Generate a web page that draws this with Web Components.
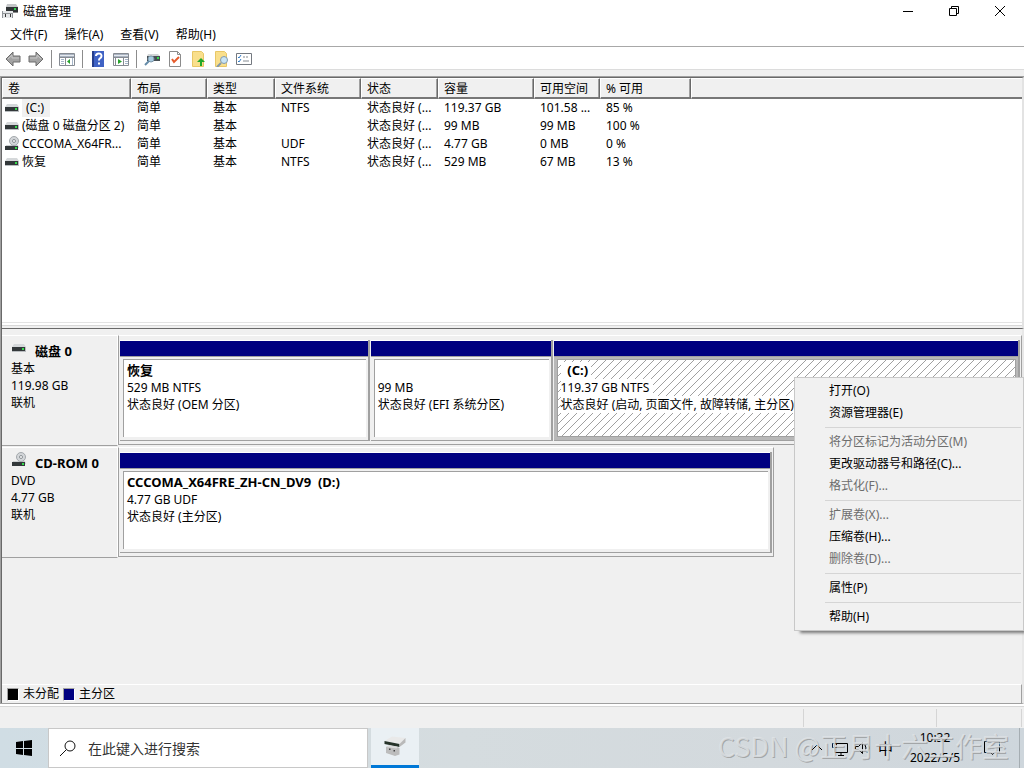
<!DOCTYPE html>
<html lang="zh-CN">
<head>
<meta charset="utf-8">
<title>磁盘管理</title>
<style>
html, body { margin: 0; height: 100%; }
body { font: 12px/18px "Noto Sans", "Noto Sans CJK SC", sans-serif; color: #000; background: #f0f0f0; overflow: hidden; }
</style>
</head>
<body>
<disk-desktop></disk-desktop>
<script>
const ICONS = {
  app: `<path d="M5 1h9l2 3H4z" fill="#c4c6c8"/><path d="M4 4h12v6H4z" fill="#303436"/><path d="M4 9h12v1H4z" fill="#888"/><path d="M12 5h2v2h-2z" fill="#2fd04a"/><path d="M0 8h11v7H0z" fill="#909498"/><path d="M1 8h10v2H1zM1 11h9v4H1z" fill="#e4e6e8"/><path d="M3 11h1v3H3zM8 11h1v3H8z" fill="#333"/>`,
  drive: `<path d="M3 4h10l2 3H1z" fill="#d5d8da"/><path d="M1 7h14v5H1z" fill="#b9bdc0"/><path d="M1 7h13v4H1z" fill="#33383a"/><path d="M11 8h2v2h-2z" fill="#35dc4c"/>`,
  cd: `<path d="M2 9h12l1 3H1z" fill="#cdd0d2"/><path d="M1 10h13v4H1z" fill="#33383a"/><path d="M11 11h2v2h-2z" fill="#35dc4c"/><circle cx="10" cy="5" r="4.500" fill="#d3d6d9" stroke="#a3a8ac"/><circle cx="10" cy="5" r="1.500" fill="#fff" stroke="#8a9094"/>`,
  back: `<path d="M1 8l7-7v4h7v6H8v4z" fill="#a3a3a3" stroke="#6c6c6c"/><path d="M3 8l4-4v3h7" fill="none" stroke="#c6c6c6"/>`,
  next: `<path d="M15 8L8 1v4H1v6h7v4z" fill="#a3a3a3" stroke="#6c6c6c"/><path d="M13 8L9 4v3H2" fill="none" stroke="#c6c6c6"/>`,
  tree: `<path d="M.5 2.500h15v12H.5z" fill="#fff" stroke="#868b92"/><path d="M1 3h14v3H1z" fill="#a9b3c1"/><path d="M1 4.500h14" stroke="#e4e8ee"/><path d="M1 6.500h14M6.500 7v7" stroke="#868b92"/><path d="M2 8.500h3M2 10.500h3M2 12.500h3M13.500 7v7" stroke="#a5b5c8"/><path d="M11 8v5L8 10.500z" fill="#27a32c"/>`,
  help: `<path d="M2 0h12v16H2z" fill="#3f62c4"/><path d="M2 0h2v16H2z" fill="#263e8c"/><path d="M6 5q0-2.500 2.800-2.500T11.500 5q0 1.500-1.700 2.500Q9 8 9 9.500M9 11.500v2" fill="none" stroke="#fff" stroke-width="2"/>`,
  action: `<path d="M.5 2.500h15v12H.5z" fill="#fff" stroke="#868b92"/><path d="M1 3h14v3H1z" fill="#a9b3c1"/><path d="M1 4.500h14" stroke="#e4e8ee"/><path d="M1 6.500h14M10.500 7v7M2.500 7v7" stroke="#868b92"/><path d="M12 8.500h3M12 10.500h3M12 12.500h3" stroke="#a5b5c8"/><path d="M5 8v5l4-2.500z" fill="#27a32c"/>`,
  rescan: `<path d="M4 3h10l2 2H3z" fill="#d2d5d7"/><path d="M3 5h13v5H3z" fill="#484f54"/><path d="M13 6h2v2h-2z" fill="#35dc4c"/><circle cx="7" cy="8" r="3" fill="#a9cbe0" stroke="#7c97aa"/><path d="M5 10l-4 4" stroke="#648ba8" stroke-width="2"/>`,
  check: `<path d="M2.500.5h8l3 3v12h-11z" fill="#fff" stroke="#8b8b8b"/><path d="M10.500.5v3h3" fill="none" stroke="#8b8b8b"/><path d="M5 8l2 3 5-5" fill="none" stroke="#e65b2b" stroke-width="2"/>`,
  up: `<path d="M2.500.5h9l2 2v13h-11z" fill="#f9df8c" stroke="#e8c766"/><path d="M11 7l4 4h-3v4h-2v-4H7z" fill="#22a82a"/>`,
  find: `<path d="M2.500.5h9l2 2v13h-11z" fill="#f9df8c" stroke="#e8c766"/><circle cx="11" cy="9" r="3.500" fill="#c8e4f5" stroke="#829aae"/><path d="M8 12l-4 4" stroke="#8498a8" stroke-width="2"/>`,
  list: `<path d="M.5 2.500h15v11H.5z" fill="#fff" stroke="#747980"/><path d="M2 6l1 1 2-3M2 10l1 1 2-3" fill="none" stroke="#317bc6"/><path d="M7 6h2m1 0h2M7 10h6" stroke="#858b92"/>`,
  min: `<path d="M3 8.500h10" stroke="#000"/>`,
  max: `<path d="M3.500 5.500h7v7h-7zM5.500 5.500v-2h7v7h-2" fill="none" stroke="#000"/>`,
  close: `<path d="M3 3l10 10M13 3L3 13" stroke="#000"/>`,
  win: `<path d="M0 2l7-1v7H0zM8 1l8-1v8H8zM0 9h7v6l-7-1zM8 9h8v7l-8-1z"/>`,
  search: `<circle cx="10" cy="6" r="5" fill="none" stroke="#111"/><path d="M6.500 9.500L0 16" stroke="#111"/>`,
  task: `<path d="M1 4l5-3 9 1-4 4z" fill="#e9e9e9"/><path d="M1 4l10 2v2L1 6z" fill="#263329"/><path d="M11 6l4-4v3l-4 3z" fill="#b9b9b9"/><path d="M2 8l2-1 6 1 1 1v4l-3 1-6-2z" fill="#bdbdbd"/><path d="M2 8l2-1 6 1-1 1z" fill="#ddd"/><path d="M4 9h1v1H4zM7 10h1v1H7z" fill="#444"/>`,
  chevron: `<path d="M3 10l5-5 5 5" fill="none" stroke="#000"/>`,
  net: `<path d="M2.500 3.500h13v9h-13zM9 13v2M6 15.500h6M.5 3.500h4v4h-4z" fill="none" stroke="#000"/>`,
  sound: `<path d="M.5 6.500h3l4-4v11l-4-4h-3zM10 5q2 3 0 6M12 3q4 5 0 10" fill="none" stroke="#000"/>`,
  note: `<path d="M.5 1.500h15v11h-5l-2 2-2-2h-6z" fill="none" stroke="#000"/>`
};

const define = (name, css, html) => customElements.define(name, class extends HTMLElement {
  connectedCallback() {
    if (this.shadowRoot) return;
    const t = document.createElement('template');
    t.innerHTML = `<style>*{box-sizing:border-box}:host([hidden]){display:none}${css}</style>${typeof html === 'function' ? html(this) : html}`;
    this.attachShadow({ mode: 'open' }).append(t.content.cloneNode(true));
  }
});

define('ui-icon', `:host{display:block;width:16px;height:16px;flex:none}svg{display:block;width:100%;height:100%}`,
  el => `<svg viewBox="0 0 16 16" aria-hidden="true">${ICONS[el.getAttribute('name')]}</svg>`);

define('title-bar', `
  :host{display:flex;align-items:center;height:22px;background:#fff;padding:0 2px}
  h1{font:inherit;margin:2px auto 0 5px}
  button{border:0;background:none;padding:0;width:46px;height:20px;display:grid;place-items:center}
  button:last-child{width:45px}`,
  `<ui-icon name="app"></ui-icon><h1>磁盘管理</h1>
   <button aria-label="最小化"><ui-icon name="min"></ui-icon></button>
   <button aria-label="还原"><ui-icon name="max"></ui-icon></button>
   <button aria-label="关闭"><ui-icon name="close"></ui-icon></button>`);

define('menu-bar', `
  :host{display:flex;align-items:center;gap:17px;height:25px;background:#fff;padding:2px 0 0 10px;border-bottom:1px solid #a8a8a8}
  button{border:0;background:none;padding:0;font:inherit;color:inherit}`,
  `<button>文件(F)</button><button>操作(A)</button><button>查看(V)</button><button>帮助(H)</button>`);

define('tool-bar', `
  :host{display:flex;align-items:center;gap:7px;height:23px;padding:2px 5px 0;background:#fff;border-bottom:1px solid #dcdcdc;box-sizing:border-box}
  button{border:0;background:none;padding:0}
  i{width:1px;height:18px;background:#8c8c8c}`,
  () => ['back:后退', 'next:前进', '', 'tree:控制台树', '', 'help:帮助', 'action:操作窗格', '', 'rescan:刷新', 'check:属性', 'up:打开', 'find:浏览', 'list:设置']
    .map(s => s ? `<button aria-label="${s.split(':')[1]}"><ui-icon name="${s.split(':')[0]}"></ui-icon></button>` : '<i></i>').join(''));

const good = '状态良好 (...';
const volumes = [
  ['drive', '<span class="sel">(C:)</span>', '简单', '基本', 'NTFS', good, '119.37 GB', '101.58 ...', '85 %'],
  ['drive', '(磁盘 0 磁盘分区 2)', '简单', '基本', '', good, '99 MB', '99 MB', '100 %'],
  ['cd', 'CCCOMA_X64FR...', '简单', '基本', 'UDF', good, '4.77 GB', '0 MB', '0 %'],
  ['drive', '恢复', '简单', '基本', 'NTFS', good, '529 MB', '67 MB', '13 %']
];
define('volume-list', `
  :host{display:block;height:253px;background:#fff;border:solid #a0a0a0;border-width:1px 0 0 1px;box-sizing:border-box}
  .in{height:100%;border:solid #696969;border-width:1px 0 1px 1px;display:flex;flex-direction:column;border-right:2px solid #e3e3e3}
  table{border-collapse:separate;border-spacing:0;table-layout:fixed;width:100%}
  th{font-weight:400;text-align:left;height:21px;padding:1px 5px 0;line-height:17px;background:#f0f0f0;border:solid;border-width:1px 1px 2px 1px;border-color:#fff #696969 #777 #fff;box-shadow:inset -1px 0 #a0a0a0}
  th:last-child{border-right:0;box-shadow:none}
  td{height:18px;padding:0 0 0 6px;white-space:nowrap}
  td:first-child{padding:0}
  .name{display:flex;align-items:center;padding-left:2px}
  .name ui-icon{margin-right:2px}
  .sel{background:#f0f0f0;padding:0 6px 0 4px}
  .scroll{margin-top:auto;height:6px;border-top:1px solid #e3e3e3;background:#f0f0f0;box-shadow:inset 0 2px #fff,inset 0 3px #d8d8d8}`,
  `<div class="in"><table><colgroup>${[129, 76, 68, 86, 77, 96, 66, 91].map(w => `<col style="width:${w}px">`).join('')}<col></colgroup>
   <thead><tr>${['卷', '布局', '类型', '文件系统', '状态', '容量', '可用空间', '% 可用', ''].map(t => `<th scope="col">${t}</th>`).join('')}</tr></thead>
   <tbody>${volumes.map(([ic, n, ...r]) => `<tr><td><div class="name"><ui-icon name="${ic}"></ui-icon>${n}</div></td>${r.map(c => `<td>${c}</td>`).join('')}</tr>`).join('')}</tbody></table>
   <div class="scroll"></div></div>`);

define('disk-row', `
  :host{display:grid;grid-template-columns:116px 1fr;height:112px}
  .label{padding:7px 9px 0;border:solid #a0a0a0;border-width:1px 0;border-top-color:#fff;height:111px;line-height:17px;border-right:1px solid #fff}
  h2{font:700 13px/17px "Noto Sans","Noto Sans CJK SC",sans-serif;display:flex;gap:8px;margin:0}
  h2 ui-icon{margin-top:-3px}
  .track{display:grid;height:110px;border:1px solid #a0a0a0;border-top-color:#fff;padding:4px 1px 3px 1px;grid-template-columns:var(--parts)}
  .wrap{display:grid;grid-template-columns:var(--span,1fr)}`,
  el => `<div class="label"><h2><ui-icon name="${el.getAttribute('icon')}"></ui-icon>${el.getAttribute('name')}</h2><slot name="info"></slot></div>
   <div class="wrap"><div class="track"><slot></slot></div></div>`);

define('disk-part', `
  :host{display:flex;flex-direction:column;min-width:0;border-right:2px solid #a0a0a0;border-bottom:1px solid #a0a0a0;margin-right:1px}
  :host(:last-child){margin-right:0}
  .bar{height:17px;background:#000080;border-top:1px solid #fff;border-bottom:1px solid #a0a0a0;flex:none}
  .box{flex:1;margin:2px 2px 3px 3px;padding:2px 3px;background:#fff;border:solid #a0a0a0;border-width:1px 0 0 1px;line-height:17px;white-space:nowrap;overflow:hidden}
  .box div{height:17px}
  span,b{white-space:pre}
  b{font-size:13px}
  :host([selected]){background:#b8b8b8}
  :host([selected]) .box{border-width:1px;background:#fff url("data:image/svg+xml,%3Csvg xmlns='http://www.w3.org/2000/svg' width='8' height='8' shape-rendering='crispEdges'%3E%3Cpath d='M0 7h1v1H0zM1 6h1v1H1zM2 5h1v1H2zM3 4h1v1H3zM4 3h1v1H4zM5 2h1v1H5zM6 1h1v1H6zM7 0h1v1H7z' fill='%23a0a0a0'/%3E%3C/svg%3E")}
  :host([selected]) :is(span,b){background:#fff;display:inline-block}`,
  el => `<div class="bar"></div><div class="box"><div><b>${el.getAttribute('name') || ''}</b></div><div><span>${el.getAttribute('size')}</span></div><div><span>${el.getAttribute('state')}</span></div></div>`);

define('context-menu', `
  :host{display:block;position:absolute;box-sizing:border-box;width:230px;padding:2px 0;background:#f1f1f1;border:1px solid #c8c8c8;box-shadow:4px 4px 3px -2px #777}
  button{display:block;width:100%;height:22px;padding:0 0 0 34px;border:0;background:none;font:inherit;text-align:left;color:#000}
  button:disabled{color:#6d6d6d}
  hr{height:1px;border:0;background:#d5d5d5;margin:3px 2px 3px 30px}`,
  () => ['打开(O)', '资源管理器(E)', '', '-将分区标记为活动分区(M)', '更改驱动器号和路径(C)...', '-格式化(F)...', '', '-扩展卷(X)...', '压缩卷(H)...', '-删除卷(D)...', '', '属性(P)', '', '帮助(H)']
    .map(s => !s ? '<hr>' : s[0] === '-' ? `<button disabled>${s.slice(1)}</button>` : `<button>${s}</button>`).join(''));

define('disk-view', `
  :host{display:flex;flex-direction:column;position:relative;flex:1;min-height:0;padding-top:6px;border:solid #a0a0a0;border-width:0 2px 1px 1px;border-right-color:#e8e8e8;box-shadow:inset 1px 0 #696969;padding-left:1px;box-sizing:border-box}
  disk-row:nth-of-type(1){--parts:251fr 183fr 467fr}
  disk-row:nth-of-type(2){--span:656fr 248fr;--parts:1fr}
  context-menu{top:48px;right:-2px}
  footer{margin-top:auto;height:19px;display:flex;align-items:center;gap:4px;padding-left:5px;border-top:1px solid #fff;border-right:1px solid #a0a0a0}
  i{width:12px;height:13px;border:1px solid #ddd;border-color:#a0a0a0 #fff #fff #a0a0a0;background:#000}
  i.p{background:#000080}`,
  `<disk-row icon="drive" name="磁盘 0"><div slot="info">基本<br>119.98 GB<br>联机</div>
     <disk-part name="恢复" size="529 MB NTFS" state="状态良好 (OEM 分区)"></disk-part>
     <disk-part size="99 MB" state="状态良好 (EFI 系统分区)"></disk-part>
     <disk-part selected name="  (C:) " size="119.37 GB NTFS " state="状态良好 (启动, 页面文件, 故障转储, 主分区)"></disk-part></disk-row>
   <disk-row icon="cd" name="CD-ROM 0"><div slot="info">DVD<br>4.77 GB<br>联机</div>
     <disk-part name="CCCOMA_X64FRE_ZH-CN_DV9  (D:)" size="4.77 GB UDF" state="状态良好 (主分区)"></disk-part></disk-row>
   <footer><i></i>未分配<i class="p"></i>主分区</footer>
   <context-menu></context-menu>`);

define('status-bar', `
  :host{display:grid;grid-template-columns:1fr 133px 85px 2px;height:24px;border-top:2px solid #fff;box-shadow:inset 0 1px #d7d7d7;padding:3px 0 1px;box-sizing:border-box}
  i{border-right:1px solid #d5d5d5}`,
  `<i></i><i></i><i></i>`);

define('task-bar', `
  :host{display:flex;position:relative;height:40px;background:linear-gradient(90deg,#d0dde4,#d5dcdf 45%,#d3d9dd 75%,#ced6dc);flex:none}
  button{border:0;padding:0;background:none;width:48px;display:grid;place-items:center;font:inherit}
  label{display:flex;align-items:center;gap:12px;width:320px;padding-left:11px;background:#fff;border:1px solid #c8c8c8}
  input{font:14px/20px "Noto Sans","Noto Sans CJK SC",sans-serif;color:#333;border:0;padding:2px 0 0;outline:0;flex:1;min-width:0;background:none}
  input::placeholder{color:#333;opacity:1}
  .task{margin-left:3px;background:#eaf0f4;border-bottom:3px solid #0078d7}
  .task ui-icon{width:24px;height:24px}
  .tray{display:flex;align-items:center;margin-left:auto;gap:7px;padding-right:24px}
  .ime{font-size:15px;width:16px}
  time{line-height:20px;text-align:center;width:80px;margin:0 2px 0 -2px}
  .tray ui-icon:nth-child(-n+3),.ime{position:relative;left:4px}
  .mark{position:absolute;right:15px;top:0;font:27px/36px "Noto Sans CJK SC",sans-serif;color:#dfe3e6d0;text-shadow:1px 1px #85858599;white-space:nowrap}
  .edge{position:absolute;right:4px;top:0;height:100%;width:1px;background:#a5adb2}`,
  `<button aria-label="开始"><ui-icon name="win"></ui-icon></button>
   <label><ui-icon name="search"></ui-icon><input aria-label="搜索" placeholder="在此键入进行搜索"></label>
   <button class="task" aria-label="磁盘管理"><ui-icon name="task"></ui-icon></button>
   <div class="tray"><ui-icon name="chevron"></ui-icon><ui-icon name="net"></ui-icon><ui-icon name="sound"></ui-icon><span class="ime">中</span>
   <time datetime="2022-05-05T10:32">10:32<br>2022/5/5</time><ui-icon name="note"></ui-icon></div>
   <div class="mark">CSDN @正月十六工作室</div><div class="edge"></div>`);

define('disk-desktop', `
  :host{display:flex;flex-direction:column;height:100vh;background:#f0f0f0}
  title-bar,menu-bar,tool-bar,volume-list,status-bar{flex:none}
  title-bar,menu-bar{box-sizing:border-box}
  volume-list{margin-top:6px}`,
  `<title-bar></title-bar><menu-bar></menu-bar><tool-bar></tool-bar><volume-list></volume-list><disk-view></disk-view><status-bar></status-bar><task-bar></task-bar>`);
</script>
</body>
</html>
